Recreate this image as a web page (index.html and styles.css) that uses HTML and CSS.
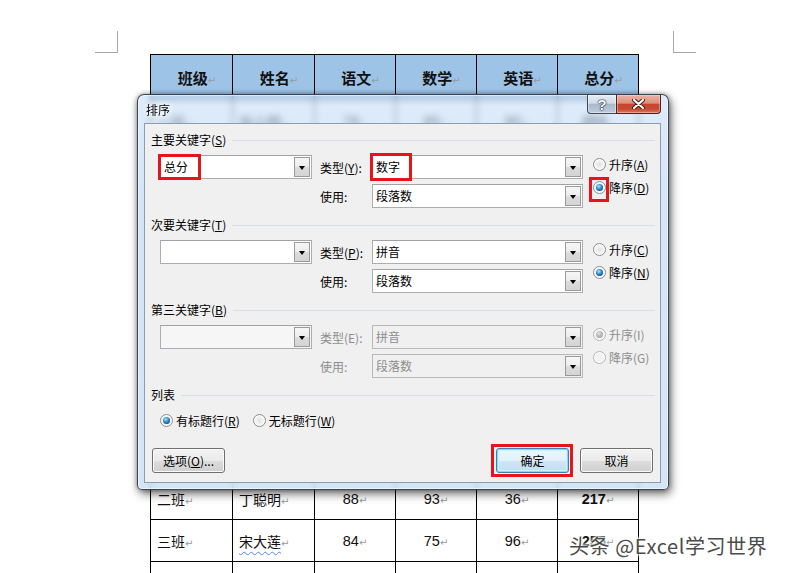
FILE: index.html
```html
<!DOCTYPE html>
<html lang="zh-CN">
<head>
<meta charset="utf-8">
<title>排序</title>
<link rel="stylesheet" href="styles.css">
</head>
<body>
<div class="page">
  <div class="marks"><span class="mark-l"></span><span class="mark-r"></span></div>
  <table class="grade">
    <colgroup><col class="c1"><col class="c2"><col class="c3"><col class="c4"><col class="c5"><col class="c6"></colgroup>
    <tr class="head"><th>班级<i>↵</i></th><th>姓名<i>↵</i></th><th>语文<i>↵</i></th><th>数学<i>↵</i></th><th>英语<i>↵</i></th><th>总分<i>↵</i></th></tr>
    <tr><td class="t">一班<i>↵</i></td><td class="t">张小明<i>↵</i></td><td>78<i>↵</i></td><td>85<i>↵</i></td><td>90<i>↵</i></td><td class="b">253<i>↵</i></td></tr>
    <tr><td class="t">一班<i>↵</i></td><td class="t">李红梅<i>↵</i></td><td>92<i>↵</i></td><td>88<i>↵</i></td><td>76<i>↵</i></td><td class="b">256<i>↵</i></td></tr>
    <tr><td class="t">一班<i>↵</i></td><td class="t">王大力<i>↵</i></td><td>65<i>↵</i></td><td>72<i>↵</i></td><td>80<i>↵</i></td><td class="b">217<i>↵</i></td></tr>
    <tr><td class="t">一班<i>↵</i></td><td class="t">赵晓燕<i>↵</i></td><td>81<i>↵</i></td><td>69<i>↵</i></td><td>88<i>↵</i></td><td class="b">238<i>↵</i></td></tr>
    <tr><td class="t">二班<i>↵</i></td><td class="t">孙志强<i>↵</i></td><td>73<i>↵</i></td><td>95<i>↵</i></td><td>67<i>↵</i></td><td class="b">235<i>↵</i></td></tr>
    <tr><td class="t">二班<i>↵</i></td><td class="t">周海涛<i>↵</i></td><td>90<i>↵</i></td><td>58<i>↵</i></td><td>84<i>↵</i></td><td class="b">232<i>↵</i></td></tr>
    <tr><td class="t">二班<i>↵</i></td><td class="t">吴丽娟<i>↵</i></td><td>66<i>↵</i></td><td>81<i>↵</i></td><td>79<i>↵</i></td><td class="b">226<i>↵</i></td></tr>
    <tr><td class="t">二班<i>↵</i></td><td class="t">郑文博<i>↵</i></td><td>87<i>↵</i></td><td>77<i>↵</i></td><td>62<i>↵</i></td><td class="b">226<i>↵</i></td></tr>
    <tr><td class="t">二班<i>↵</i></td><td class="t">钱雨桐<i>↵</i></td><td>79<i>↵</i></td><td>84<i>↵</i></td><td>71<i>↵</i></td><td class="b">234<i>↵</i></td></tr>
    <tr><td class="t">二班<i>↵</i></td><td class="t">丁聪明<i>↵</i></td><td>88<i>↵</i></td><td>93<i>↵</i></td><td>36<i>↵</i></td><td class="b">217<i>↵</i></td></tr>
    <tr><td class="t">三班<i>↵</i></td><td class="t"><span class="spell">宋大莲</span><i>↵</i></td><td>84<i>↵</i></td><td>75<i>↵</i></td><td>96<i>↵</i></td><td class="b">255<i>↵</i></td></tr>
    <tr class="tail"><td></td><td></td><td></td><td></td><td></td><td></td></tr>
  </table>

  <div class="watermark">头条 @Excel学习世界</div>

  <div class="dialog">
    <div class="titlebar">
      <span class="title">排序</span>
      <div class="caption-btns">
        <span class="cb help">?</span>
        <span class="cb close"><svg width="13" height="10" viewBox="0 0 13 10"><path d="M2 1 L11 9 M11 1 L2 9" stroke="#3a1a16" stroke-width="4" stroke-linecap="round"/><path d="M2 1 L11 9 M11 1 L2 9" stroke="#ffffff" stroke-width="2.2" stroke-linecap="round"/></svg></span>
      </div>
    </div>
    <div class="client">
      <section class="group">
        <div class="group-head"><span>主要关键字(<u>S</u>)</span><i class="rule"></i></div>
        <div class="group-body">
          <div class="combo key"><span class="val">总分</span><span class="drop"><b></b></span><span class="hl hl-key"></span></div>
          <div class="fields">
            <div class="field"><label>类型(<u>Y</u>):</label><div class="combo wide"><span class="val">数字</span><span class="drop"><b></b></span><span class="hl hl-type"></span></div></div>
            <div class="field"><label>使用:</label><div class="combo wide"><span class="val">段落数</span><span class="drop"><b></b></span></div></div>
          </div>
          <div class="radios">
            <div class="radio-item"><span class="radio"></span>升序(<u>A</u>)</div>
            <div class="radio-item"><span class="radio on"><span class="hl hl-radio"></span></span>降序(<u>D</u>)</div>
          </div>
        </div>
      </section>

      <section class="group">
        <div class="group-head"><span>次要关键字(<u>T</u>)</span><i class="rule"></i></div>
        <div class="group-body">
          <div class="combo key"><span class="val"></span><span class="drop"><b></b></span></div>
          <div class="fields">
            <div class="field"><label>类型(<u>P</u>):</label><div class="combo wide"><span class="val">拼音</span><span class="drop"><b></b></span></div></div>
            <div class="field"><label>使用:</label><div class="combo wide"><span class="val">段落数</span><span class="drop"><b></b></span></div></div>
          </div>
          <div class="radios">
            <div class="radio-item"><span class="radio"></span>升序(<u>C</u>)</div>
            <div class="radio-item"><span class="radio on"></span>降序(<u>N</u>)</div>
          </div>
        </div>
      </section>

      <section class="group">
        <div class="group-head"><span>第三关键字(<u>B</u>)</span><i class="rule"></i></div>
        <div class="group-body">
          <div class="combo key soft"><span class="val"></span><span class="drop"><b></b></span></div>
          <div class="fields off">
            <div class="field"><label>类型(E):</label><div class="combo wide dis"><span class="val">拼音</span><span class="drop"><b></b></span></div></div>
            <div class="field"><label>使用:</label><div class="combo wide dis"><span class="val">段落数</span><span class="drop"><b></b></span></div></div>
          </div>
          <div class="radios off">
            <div class="radio-item"><span class="radio dis on"></span>升序(I)</div>
            <div class="radio-item"><span class="radio dis"></span>降序(G)</div>
          </div>
        </div>
      </section>

      <section class="group list">
        <div class="group-head"><span>列表</span><i class="rule"></i></div>
        <div class="list-row">
          <div class="radio-item"><span class="radio on"></span>有标题行(<u>R</u>)</div>
          <div class="radio-item"><span class="radio"></span>无标题行(<u>W</u>)</div>
        </div>
      </section>

      <div class="buttons">
        <button class="btn">选项(<u>O</u>)...</button>
        <span class="spacer"></span>
        <span class="ok-wrap"><button class="btn default">确定</button><span class="hl hl-ok"></span></span>
        <button class="btn">取消</button>
      </div>
    </div>
  </div>
</div>
</body>
</html>
```

FILE: styles.css
```css
html, body {
  margin: 0;
  padding: 0;
  width: 785px;
  height: 573px;
  overflow: hidden;
  background: #ffffff;
  font-family: "Noto Sans CJK SC", "Liberation Sans", sans-serif;
}

.page {
  position: relative;
  width: 785px;
  height: 573px;
  box-sizing: border-box;
  padding: 31px 0 0 95px;
  overflow: hidden;
}

/* page margin marks */
.marks {
  display: flex;
  justify-content: space-between;
  width: 601px;
  height: 22px;
  margin-bottom: 1px;
}
.mark-l, .mark-r {
  display: block;
  width: 23px;
  height: 22px;
  box-sizing: border-box;
  border-bottom: 1px solid #a8a8a8;
}
.mark-l { border-right: 1px solid #a8a8a8; }
.mark-r { border-left: 1px solid #a8a8a8; }

/* word table */
.grade {
  margin-left: 55px;
  border-collapse: collapse;
  table-layout: fixed;
  width: 489px;
}
.grade col.c1 { width: 82px; }
.grade col.c2 { width: 82px; }
.grade col.c3 { width: 81px; }
.grade col.c4 { width: 81px; }
.grade col.c5 { width: 81px; }
.grade col.c6 { width: 81px; }
.grade th, .grade td {
  border: 1px solid #000;
  padding: 0;
  height: 41px;
  text-align: center;
  vertical-align: middle;
  font-family: "Liberation Sans", "Noto Sans CJK SC", sans-serif;
  font-size: 14.5px;
  color: #111;
  white-space: nowrap;
}
.grade tr.head th {
  height: 44px;
  background: #9dc3e6;
  font-family: "Noto Sans CJK SC", sans-serif;
  font-weight: 700;
  font-size: 15px;
  padding-left: 11px;
}
.grade tr.tail td { height: 20px; }
.grade td.t {
  text-align: left;
  padding-left: 6px;
  font-family: "Noto Sans CJK SC", sans-serif;
  font-size: 14px;
}
.grade td.b { font-weight: 700; }
.grade i {
  font-style: normal;
  font-weight: 400;
  font-family: "DejaVu Sans", sans-serif;
  font-size: 10px;
  color: #9a9a9a;
}
.spell {
  text-decoration: underline wavy #4f86e8;
  text-decoration-thickness: 1px;
  text-underline-offset: 4px;
}

.watermark {
  position: absolute;
  left: 569px;
  top: 533px;
  font-family: "Noto Sans CJK SC", sans-serif;
  font-size: 20px;
  letter-spacing: 0.6px;
  line-height: 26px;
  color: #4b4b4b;
  text-shadow: 0 0 2px #fff, 0 0 3px #fff, 0 0 4px #fff, 0 0 4px #fff;
}

/* dialog window */
.dialog {
  position: absolute;
  left: 137px;
  top: 94px;
  width: 532px;
  height: 396px;
  box-sizing: border-box;
  border: 1px solid rgba(30, 40, 55, 0.85);
  border-radius: 7px 7px 5px 5px;
  padding: 0 7px 6px 6px;
  display: flex;
  flex-direction: column;
  background: linear-gradient(180deg, rgba(200, 223, 247, 0.6) 0%, rgba(185, 213, 242, 0.62) 30%, rgba(200, 222, 245, 0.78) 100%);
  backdrop-filter: blur(3px);
  box-shadow: inset 0 0 0 1px rgba(255, 255, 255, 0.55), 2px 4px 10px rgba(0, 0, 0, 0.55), 0 0 5px rgba(0, 0, 0, 0.35);
  font-size: 12px;
  color: #000;
}
.titlebar {
  height: 28px;
  display: flex;
  align-items: center;
  justify-content: space-between;
}
.title {
  padding-left: 2px;
  padding-top: 1px;
  font-size: 12px;
  line-height: 16px;
  text-shadow: 0 0 6px #fff, 0 0 4px #fff;
}
.caption-btns {
  align-self: flex-start;
  display: flex;
  height: 19px;
}
.cb {
  display: flex;
  align-items: center;
  justify-content: center;
  box-sizing: border-box;
  height: 19px;
  border: 1px solid rgba(35, 45, 60, 0.85);
  border-top: none;
}
.help {
  width: 29px;
  border-right: none;
  border-radius: 0 0 0 4px;
  background: linear-gradient(180deg, #e6edf5 0%, #d2dce8 45%, #a9b9cc 52%, #bccbdc 100%);
  box-shadow: inset 0 0 0 1px rgba(255, 255, 255, 0.45);
  color: #fff;
  font-family: "Liberation Sans", sans-serif;
  font-weight: 700;
  font-size: 15px;
  text-shadow: 0 0 1px #1d2430, 0 0 1px #1d2430, 0 0 2px #1d2430;
}
.close {
  width: 45px;
  border-color: #4e211b;
  border-radius: 0 0 4px 0;
  background: linear-gradient(180deg, #ebb3a6 0%, #de907e 45%, #c8452d 52%, #c64b32 78%, #da7a5f 100%);
  box-shadow: inset 0 0 0 1px rgba(255, 220, 210, 0.45);
}

.client {
  flex: 1;
  background: #f0f0f0;
  border: 1px solid #8c9db2;
  padding: 7px 7px 8px 6px;
  display: flex;
  flex-direction: column;
}

.group { margin-bottom: 8px; margin-right: -2px; }
.group-head {
  display: flex;
  align-items: center;
  height: 18px;
  line-height: 18px;
}
.group-head .rule {
  flex: 1;
  height: 1px;
  margin-left: 6px;
  background: #d5dfe5;
}
.group-body {
  display: flex;
  align-items: flex-start;
  margin-top: 6px;
  padding-left: 9px;
}

.combo {
  position: relative;
  display: flex;
  box-sizing: border-box;
  height: 24px;
  background: #fff;
  border: 1px solid #abadb3;
  border-top-color: #a0a2a8;
}
.combo.key { width: 152px; }
.combo.wide { width: 211px; }
.combo.soft { background: #f6f6f6; }
.combo.dis { background: #f0f0f0; border-color: #b9b9b9; color: #8d8d8d; }
.combo .val {
  flex: 1;
  padding-left: 3px;
  line-height: 22px;
  font-size: 12px;
}
.combo .drop {
  display: flex;
  align-items: center;
  justify-content: center;
  width: 16px;
  margin: 1px 1px 1px 0;
  box-sizing: border-box;
  border: 1px solid #9a9a9a;
  background: linear-gradient(180deg, #f6f6f6 0%, #ececec 50%, #dcdcdc 51%, #d4d4d4 100%);
}
.combo .drop b {
  width: 0;
  height: 0;
  border-left: 3.5px solid transparent;
  border-right: 3.5px solid transparent;
  border-top: 4px solid #000;
  margin-top: 1px;
}

.fields {
  display: flex;
  flex-direction: column;
  gap: 5px;
  margin-left: 8px;
}
.field { display: flex; align-items: center; }
.field label { width: 52px; font-size: 12px; }
.fields.off label { color: #8d8d8d; }

.radios {
  display: flex;
  flex-direction: column;
  gap: 6px;
  margin-left: 10px;
  margin-top: 1px;
}
.radios.off { color: #8d8d8d; }
.radio-item {
  display: flex;
  align-items: center;
  height: 17px;
  font-size: 12px;
  white-space: nowrap;
}
.radio {
  position: relative;
  display: inline-block;
  box-sizing: border-box;
  width: 13px;
  height: 13px;
  margin-right: 3px;
  border-radius: 50%;
  border: 1px solid #8a8c8e;
  background: radial-gradient(circle at 50% 50%, #e0e0e0 0%, #f2f2f2 45%, #f8f8f8 100%);
  box-shadow: inset 0 0 0 1px #fff;
}
.radio.on::after {
  content: "";
  position: absolute;
  left: 2px;
  top: 2px;
  width: 7px;
  height: 7px;
  border-radius: 50%;
  background: radial-gradient(circle at 40% 35%, #b8e6ff 0%, #3c9ee0 35%, #15589a 70%, #0b3c6e 100%);
}
.radio.dis { border-color: #b3b3b3; background: #f2f2f2; }
.radio.dis.on::after { background: radial-gradient(circle at 40% 35%, #e3e3e3 0%, #b5b5b5 50%, #9c9c9c 100%); }

.list-row {
  display: flex;
  gap: 13px;
  margin-top: 8px;
  padding-left: 9px;
}

.buttons {
  display: flex;
  margin-top: 11px;
  margin-left: 1px;
  gap: 11px;
}
.spacer { flex: 1; }
.ok-wrap { position: relative; display: flex; }
.btn {
  width: 73px;
  height: 25px;
  padding: 0;
  border: 1px solid #707070;
  border-radius: 3px;
  background: linear-gradient(180deg, #f2f2f2 0%, #ebebeb 50%, #dddddd 51%, #cfcfcf 100%);
  box-shadow: inset 0 0 0 1px #fbfbfb;
  font-family: "Noto Sans CJK SC", sans-serif;
  font-size: 12px;
  color: #000;
}
.btn.default {
  border-color: #3c7fb1;
  box-shadow: inset 0 0 0 1px #7fdcfb, inset 0 0 0 2px #d2f2fd;
  background: linear-gradient(180deg, #eaf6fd 0%, #e3f1fb 50%, #cfe6f6 51%, #c2ddf1 100%);
}

/* red annotation boxes */
.hl {
  position: absolute;
  box-sizing: border-box;
  border: 3px solid #e5141d;
  pointer-events: none;
}
.hl-key { left: -3px; top: -2px; width: 43px; height: 26px; }
.hl-type { left: -3px; top: -3px; width: 42px; height: 28px; }
.hl-radio { left: -5px; top: -5px; width: 20px; height: 25px; }
.hl-ok { left: -5px; top: -4px; width: 82px; height: 33px; }
```
